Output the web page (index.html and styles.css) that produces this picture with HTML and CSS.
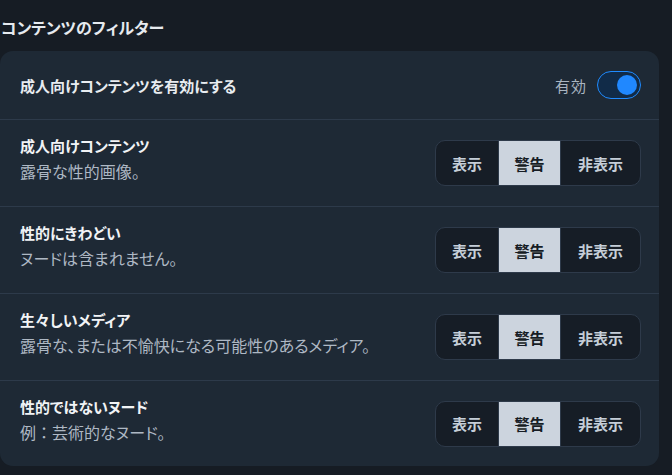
FILE: index.html
```html
<!DOCTYPE html>
<html lang="ja">
<head>
<meta charset="utf-8">
<link rel="stylesheet" href="styles.css">
</head>
<body>
<h2 class="heading">コンテンツのフィルター</h2>
<div class="card">
  <div class="row row-first">
    <div class="label">成人向けコンテンツを有効にする</div>
    <div class="switch-wrap">
      <span class="switch-text">有効</span>
      <span class="switch"><span class="knob"></span></span>
    </div>
  </div>
  <div class="row">
    <div class="text">
      <div class="title">成人向けコンテンツ</div>
      <div class="desc">露骨な性的画像。</div>
    </div>
    <div class="seg">
      <span class="opt">表示</span><span class="opt sel">警告</span><span class="opt">非表示</span>
    </div>
  </div>
  <div class="row">
    <div class="text">
      <div class="title">性的にきわどい</div>
      <div class="desc">ヌードは含まれません。</div>
    </div>
    <div class="seg">
      <span class="opt">表示</span><span class="opt sel">警告</span><span class="opt">非表示</span>
    </div>
  </div>
  <div class="row">
    <div class="text">
      <div class="title">生々しいメディア</div>
      <div class="desc">露骨な、または不愉快になる可能性のあるメディア。</div>
    </div>
    <div class="seg">
      <span class="opt">表示</span><span class="opt sel">警告</span><span class="opt">非表示</span>
    </div>
  </div>
  <div class="row">
    <div class="text">
      <div class="title">性的ではないヌード</div>
      <div class="desc">例<span class="fw">：</span>芸術的なヌード。</div>
    </div>
    <div class="seg">
      <span class="opt">表示</span><span class="opt sel">警告</span><span class="opt">非表示</span>
    </div>
  </div>
</div>
</body>
</html>
```
FILE: styles.css
```css
html, body {
  margin: 0;
  padding: 0;
  background: #161c24;
}
body {
  font-family: "Noto Sans CJK JP", "Noto Sans", sans-serif;
  color: #f1f3f5;
  width: 672px;
  height: 475px;
  overflow: hidden;
}
.heading {
  margin: 0;
  padding: 15px 0 0 1px;
  height: 51px;
  box-sizing: border-box;
  font-size: 16px;
  font-weight: 700;
  line-height: 24px;
  color: #e6eaef;
  font-feature-settings: "palt";
}
.card {
  width: 659px;
  background: #1e2935;
  border-radius: 13px;
}
.row {
  display: flex;
  justify-content: space-between;
  align-items: center;
  padding: 20px 18px 20px 20px;
  border-top: 1px solid #2d3a4a;
  height: 87px;
  box-sizing: border-box;
}
.row:last-child { height: 86px; }
.row-first {
  border-top: none;
  height: 68px;
}
.label {
  font-size: 15px;
  font-weight: 700;
  color: #e8ecf0;
  font-feature-settings: "palt";
}
.switch-wrap {
  display: flex;
  align-items: center;
  gap: 10px;
}
.switch-text {
  font-size: 15px;
  color: #a9b4c0;
  letter-spacing: 1px;
}
.switch {
  width: 44px;
  height: 28px;
  box-sizing: border-box;
  border: 1.5px solid #1f8bff;
  border-radius: 14px;
  background: #112b48;
  display: flex;
  align-items: center;
  justify-content: flex-end;
  padding-right: 3px;
}
.knob {
  width: 20px;
  height: 20px;
  border-radius: 50%;
  background: #2088ff;
}
.text {
  align-self: flex-start;
  margin-top: -5px;
}
.title {
  font-size: 15px;
  font-weight: 700;
  line-height: 22px;
  color: #f1f3f5;
  font-feature-settings: "palt";
}
.desc {
  font-size: 16px;
  line-height: 24px;
  color: #aeb8c4;
  margin-top: 2px;
  font-feature-settings: "palt";
}
.fw {
  font-feature-settings: normal;
}
.seg {
  display: flex;
  height: 46px;
  box-sizing: border-box;
  border: 1px solid #2e3a4a;
  border-radius: 10px;
  overflow: hidden;
  background: #161d26;
}
.opt {
  display: flex;
  align-items: center;
  justify-content: center;
  font-size: 15px;
  font-weight: 700;
  color: #c5ced8;
  width: 62px;
  border-right: 1px solid #2e3a4a;
}
.opt.sel {
  width: 61px;
  background: #ccd4de;
  color: #161c24;
}
.opt:last-child {
  border-right: none;
  width: 79px;
}
```
